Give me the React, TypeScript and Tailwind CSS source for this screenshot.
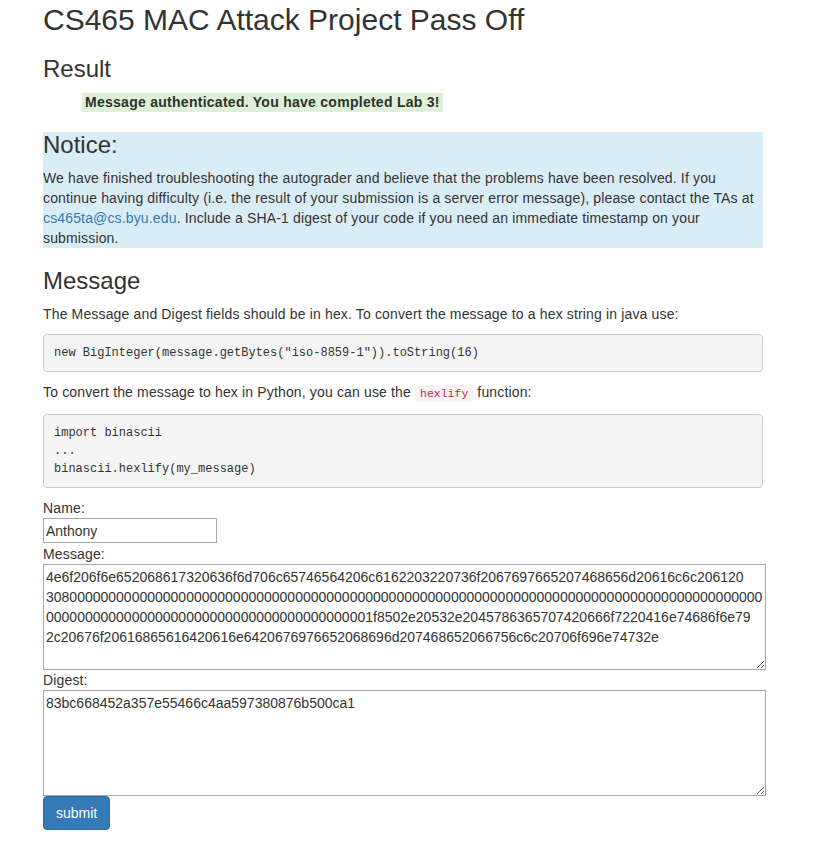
import React, { useState } from 'react';

const MESSAGE_HEX = [
  '4e6f206f6e652068617320636f6d706c65746564206c6162203220736f2067697665207468656d20616c6c206120',
  '3080' + '0'.repeat(88),
  '0'.repeat(41) + '1f8502e20532e2045786365707420666f7220416e74686f6e79',
  '2c20676f20616865616420616e6420676976652068696d207468652066756c6c20706f696e74732e',
].join('\n');

export default function App() {
  const [name, setName] = useState('Anthony');
  const [message, setMessage] = useState(MESSAGE_HEX);
  const [digest, setDigest] = useState('83bc668452a357e55466c4aa597380876b500ca1');

  return (
    <div className="min-h-[859px] bg-white pl-[43px] pt-[3px] font-['Liberation_Sans',Arial,sans-serif] text-[14px] leading-[20px] text-[#333]">
      <div className="w-[720px]">
        <h2 className="text-[30px] font-normal leading-[33px]">CS465 MAC Attack Project Pass Off</h2>

        <h3 className="mt-[20px] text-[24px] font-normal leading-[26px]">Result</h3>
        <div className="mt-[10px] h-[20px] pl-[39px]">
          <span className="inline-block bg-[#dff0d8] px-[3px] font-bold leading-[19px] tracking-[0.27px] text-[#2b332b]">
            Message authenticated. You have completed Lab 3!
          </span>
        </div>

        {/* notice box */}
        <div className="mt-[20px] bg-[#d9edf7]">
          <h3 className="text-[24px] font-normal leading-[26px]">Notice:</h3>
          <p className="mt-[10px] tracking-[0.15px]">
            We have finished troubleshooting the autograder and believe that the problems have been resolved. If you
            <br />
            continue having difficulty (i.e. the result of your submission is a server error message), please contact the TAs at
            <br />
            <a href="#" className="text-[#337ab7]">cs465ta@cs.byu.edu</a>. Include a SHA-1 digest of your code if you need an immediate timestamp on your
            <br />
            submission.
          </p>
        </div>

        <h3 className="mt-[20px] text-[24px] font-normal leading-[26px]">Message</h3>
        <p className="mt-[10px] tracking-[0.15px]">
          The Message and Digest fields should be in hex. To convert the message to a hex string in java use:
        </p>
        <pre className="mt-[10px] rounded-[4px] border border-[#ccc] bg-[#f5f5f5] px-[10px] py-[9px] font-['Liberation_Mono','Courier_New',monospace] text-[12px] leading-[18px] text-[#333]">
          new BigInteger(message.getBytes("iso-8859-1")).toString(16)
        </pre>
        <p className="mt-[10px] tracking-[0.15px]">
          To convert the message to hex in Python, you can use the{' '}
          <code className="rounded-[4px] bg-[#f9f2f4] px-[5px] py-[2px] font-['Liberation_Mono','Courier_New',monospace] text-[11.5px] tracking-normal text-[#c7254e]">
            hexlify
          </code>{' '}
          function:
        </p>
        <pre className="mt-[10px] rounded-[4px] border border-[#ccc] bg-[#f5f5f5] px-[10px] py-[9px] font-['Liberation_Mono','Courier_New',monospace] text-[12px] leading-[18px] text-[#333]">
          {'import binascii\n...\nbinascii.hexlify(my_message)'}
        </pre>

        <form className="mt-[10px] tracking-[0.15px]" onSubmit={(e) => e.preventDefault()}>
          <label className="block">Name:</label>
          <input
            type="text"
            value={name}
            onChange={(e) => setName(e.target.value)}
            className="block h-[25px] w-[174px] border border-[#a9a9a9] bg-white px-[2px] text-[14px] leading-[20px] tracking-normal text-[#333] outline-none"
          />
          <label className="mt-[1px] block">Message:</label>
          <textarea
            value={message}
            onChange={(e) => setMessage(e.target.value)}
            className="block h-[106px] w-[723px] border border-[#a9a9a9] bg-white p-[2px] text-[14px] leading-[20px] tracking-normal text-[#333] outline-none"
          />
          <label className="block">Digest:</label>
          <textarea
            value={digest}
            onChange={(e) => setDigest(e.target.value)}
            className="block h-[106px] w-[723px] border border-[#a9a9a9] bg-white p-[2px] text-[14px] leading-[20px] tracking-normal text-[#333] outline-none"
          />
          <button
            type="submit"
            className="block rounded-[4px] border border-[#2e6da4] bg-[#337ab7] px-[12px] py-[6px] text-[14px] leading-[20px] tracking-normal text-white"
          >
            submit
          </button>
        </form>
      </div>
    </div>
  );
}
